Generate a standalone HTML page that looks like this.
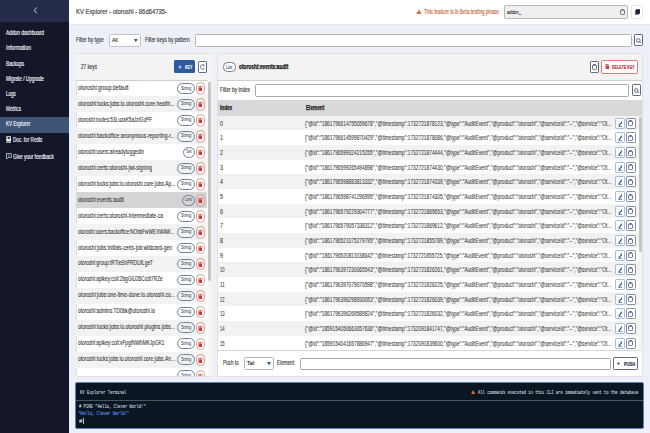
<!DOCTYPE html>
<html><head><meta charset="utf-8"><style>
html,body{margin:0;padding:0;background:#eef0f8;}
#root{position:relative;width:650px;height:433px;overflow:hidden;font-family:'Liberation Sans', sans-serif;}
.a{position:absolute;}
.t{position:absolute;white-space:nowrap;transform-origin:0 0;}
</style></head><body><div id="root">
<div class="a" style="left:69.00px;top:0.00px;width:581.00px;height:433.00px;background:#eef0f8;"></div>
<div class="a" style="left:69.00px;top:0.00px;width:581.00px;height:23.60px;background:#ffffff;"></div>
<div class="a" style="left:69.00px;top:23.60px;width:581.00px;height:0.80px;background:#e4e7f0;"></div>
<div class="a" style="left:0.00px;top:0.00px;width:69.00px;height:433.00px;background:#141729;"></div>
<div class="a" style="left:0.00px;top:0.00px;width:69.00px;height:21.50px;background:#262d4b;"></div>
<svg class="a" style="left:32.50px;top:7.40px;width:5.00px;height:6.80px" viewBox="0 0 5 6.8" preserveAspectRatio="none"><polyline points="3.5,0.7 1.3,3.4 3.5,6.1" fill="none" stroke="#cfd1dc" stroke-width="1.0" stroke-linecap="round" stroke-linejoin="round"/></svg>
<div class="a" style="left:0.00px;top:117.10px;width:69.00px;height:15.70px;background:#3e5577;"></div>
<span class="t" style="left:6.00px;top:30px;font-size:6.4px;line-height:6.4px;font-weight:400;color:#f4f5f9;font-family:'Liberation Sans', sans-serif;transform:scaleX(0.7529);-webkit-text-stroke:0.15px #f4f5f9;">Addon dashboard</span>
<span class="t" style="left:6.00px;top:45px;font-size:6.4px;line-height:6.4px;font-weight:400;color:#f4f5f9;font-family:'Liberation Sans', sans-serif;transform:scaleX(0.7816);-webkit-text-stroke:0.15px #f4f5f9;">Information</span>
<span class="t" style="left:6.00px;top:61px;font-size:6.4px;line-height:6.4px;font-weight:400;color:#f4f5f9;font-family:'Liberation Sans', sans-serif;transform:scaleX(0.7424);-webkit-text-stroke:0.15px #f4f5f9;">Backups</span>
<span class="t" style="left:6.00px;top:76px;font-size:6.4px;line-height:6.4px;font-weight:400;color:#f4f5f9;font-family:'Liberation Sans', sans-serif;transform:scaleX(0.7428);-webkit-text-stroke:0.15px #f4f5f9;">Migrate / Upgrade</span>
<span class="t" style="left:6.00px;top:91px;font-size:6.4px;line-height:6.4px;font-weight:400;color:#f4f5f9;font-family:'Liberation Sans', sans-serif;transform:scaleX(0.7143);-webkit-text-stroke:0.15px #f4f5f9;">Logs</span>
<span class="t" style="left:6.00px;top:106px;font-size:6.4px;line-height:6.4px;font-weight:400;color:#f4f5f9;font-family:'Liberation Sans', sans-serif;transform:scaleX(0.7284);-webkit-text-stroke:0.15px #f4f5f9;">Metrics</span>
<span class="t" style="left:6.00px;top:121px;font-size:6.4px;line-height:6.4px;font-weight:400;color:#f4f5f9;font-family:'Liberation Sans', sans-serif;transform:scaleX(0.7095);-webkit-text-stroke:0.15px #f4f5f9;">KV Explorer</span>
<svg class="a" style="left:6.00px;top:136.00px;width:5.40px;height:7.00px" viewBox="0 0 5.4 7" preserveAspectRatio="none"><rect x="0.3" y="0.2" width="5" height="6.6" rx="0.6" fill="#eceef4"/><rect x="1.6" y="1.2" width="2.4" height="1.6" fill="#141729"/><rect x="0.3" y="5.6" width="5" height="0.5" fill="#141729"/></svg>
<span class="t" style="left:13.00px;top:137px;font-size:6.4px;line-height:6.4px;font-weight:400;color:#f4f5f9;font-family:'Liberation Sans', sans-serif;transform:scaleX(0.7259);-webkit-text-stroke:0.15px #f4f5f9;">Doc. for Redis</span>
<svg class="a" style="left:6.00px;top:153.20px;width:5.80px;height:6.80px" viewBox="0 0 5.8 7" preserveAspectRatio="none"><path d="M0.5,0.5 H5.3 V4.6 H2 L0.5,6.3 Z" fill="none" stroke="#eceef4" stroke-width="0.7"/><rect x="2.6" y="1.4" width="0.6" height="1.7" fill="#eceef4"/><rect x="2.6" y="3.5" width="0.6" height="0.6" fill="#eceef4"/></svg>
<span class="t" style="left:13.00px;top:154px;font-size:6.4px;line-height:6.4px;font-weight:400;color:#f4f5f9;font-family:'Liberation Sans', sans-serif;transform:scaleX(0.7410);-webkit-text-stroke:0.15px #f4f5f9;">Give your feedback</span>
<span class="t" style="left:76.00px;top:8px;font-size:7.6px;line-height:7.6px;font-weight:400;color:#474747;font-family:'Liberation Sans', sans-serif;transform:scaleX(0.7755);-webkit-text-stroke:0.2px #474747;">KV Explorer - otoroshi - 86d64735-</span>
<svg class="a" style="left:415.60px;top:9.00px;width:5.80px;height:5.40px" viewBox="0 0 6 5.4" preserveAspectRatio="none"><polygon points="3,0.3 5.8,5.2 0.2,5.2" fill="#c4622d"/><rect x="2.75" y="1.8" width="0.5" height="1.8" fill="#fff"/><rect x="2.75" y="4.1" width="0.5" height="0.5" fill="#fff"/></svg>
<span class="t" style="left:423.80px;top:9px;font-size:6.7px;line-height:6.7px;font-weight:400;color:#c0602c;font-family:'Liberation Sans', sans-serif;transform:scaleX(0.7035);-webkit-text-stroke:0.12px #c0602c;">This feature is in Beta testing phase</span>
<div class="a" style="left:504.00px;top:5.30px;width:123.60px;height:13.50px;background:#efefef;box-sizing:border-box;border:0.7px solid #b8b8b8;border-radius:1.5px;"></div>
<span class="t" style="left:506.60px;top:9px;font-size:6.0px;line-height:6.0px;font-weight:400;color:#222;font-family:'Liberation Sans', sans-serif;transform:scaleX(0.6989);-webkit-text-stroke:0.1px #222;">addon_</span>
<svg class="a" style="left:620.00px;top:9.00px;width:5.00px;height:6.00px" viewBox="0 0 5 6" preserveAspectRatio="none"><rect x="0.5" y="1.05" width="4" height="4.5" rx="0.9" fill="none" stroke="#46536a" stroke-width="0.8"/><rect x="1.3" y="0.3" width="2.4" height="1.3" rx="0.4" fill="#6a6a6a"/></svg>
<div class="a" style="left:631.20px;top:5.30px;width:12.00px;height:14.10px;background:#ffffff;box-sizing:border-box;border:0.6px solid #e4e4e4;border-radius:1.5px;"></div>
<svg class="a" style="left:634.60px;top:9.40px;width:5.40px;height:6.00px" viewBox="0 0 5.4 6" preserveAspectRatio="none"><path d="M1.2,0.3 H5.2 V4.2 L3.6,5.4 H0.3 V1.4 Z" fill="#1d2433"/><path d="M0.3,5.8 L1.3,4.6" stroke="#1d2433" stroke-width="0.6"/></svg>
<span class="t" style="left:76.00px;top:37px;font-size:6.4px;line-height:6.4px;font-weight:400;color:#333;font-family:'Liberation Sans', sans-serif;transform:scaleX(0.7542);-webkit-text-stroke:0.12px #333;">Filter by type</span>
<div class="a" style="left:109.00px;top:34.20px;width:32.00px;height:12.50px;background:#ffffff;box-sizing:border-box;border:0.7px solid #c2c2c2;border-radius:1.5px;"></div>
<span class="t" style="left:111.60px;top:37px;font-size:6.0px;line-height:6.0px;font-weight:400;color:#222;font-family:'Liberation Sans', sans-serif;transform:scaleX(0.8393);-webkit-text-stroke:0.12px #222;">All</span>
<svg class="a" style="left:134.30px;top:38.80px;width:3.60px;height:3.40px" viewBox="0 0 3.6 3.4" preserveAspectRatio="none"><polygon points="0,0 3.6,0 1.8,3.4" fill="#2d5aa0"/></svg>
<span class="t" style="left:145.40px;top:37px;font-size:6.4px;line-height:6.4px;font-weight:400;color:#333;font-family:'Liberation Sans', sans-serif;transform:scaleX(0.7518);-webkit-text-stroke:0.12px #333;">Filter keys by pattern</span>
<div class="a" style="left:195.00px;top:34.30px;width:436.80px;height:12.30px;background:#ffffff;box-sizing:border-box;border:0.7px solid #b4b4b4;border-radius:1.5px;"></div>
<div class="a" style="left:634.00px;top:34.30px;width:9.20px;height:11.80px;background:#ffffff;box-sizing:border-box;border:0.7px solid #5c6b86;border-radius:1.2px;"></div>
<svg class="a" style="left:636.20px;top:37.60px;width:5.00px;height:5.60px" viewBox="0 0 5 5.6" preserveAspectRatio="none"><circle cx="2.3" cy="2.4" r="1.8" fill="none" stroke="#33415c" stroke-width="0.8"/><line x1="3.6" y1="3.7" x2="4.9" y2="5.3" stroke="#33415c" stroke-width="0.9"/></svg>
<div class="a" style="left:75.50px;top:53.30px;width:136.90px;height:323.70px;background:#ffffff;box-sizing:border-box;border:0.6px solid #e0e0e0;border-radius:2px;"></div>
<div class="a" style="left:76.10px;top:53.90px;width:135.70px;height:26.10px;background:#f3f3f3;"></div>
<div class="a" style="left:76.10px;top:79.50px;width:135.70px;height:0.90px;background:#cfcfcf;"></div>
<span class="t" style="left:80.80px;top:64px;font-size:6.4px;line-height:6.4px;font-weight:400;color:#333;font-family:'Liberation Sans', sans-serif;transform:scaleX(0.7262);-webkit-text-stroke:0.12px #333;">27 keys</span>
<div class="a" style="left:174.20px;top:60.20px;width:20.90px;height:13.00px;background:#2d5a9e;border-radius:1.5px;"></div>
<svg class="a" style="left:178.00px;top:65.00px;width:4.00px;height:4.00px" viewBox="0 0 4 4" preserveAspectRatio="none"><rect x="1.55" y="0.2" width="0.9" height="3.6" fill="#c9d6ec"/><rect x="0.2" y="1.55" width="3.6" height="0.9" fill="#c9d6ec"/></svg>
<span class="t" style="left:185.00px;top:65px;font-size:5.4px;line-height:5.4px;font-weight:700;color:#ffffff;font-family:'Liberation Sans', sans-serif;transform:scaleX(0.6580);-webkit-text-stroke:0.12px #ffffff;">KEY</span>
<div class="a" style="left:197.90px;top:61.00px;width:8.90px;height:11.80px;background:#ffffff;box-sizing:border-box;border:0.7px solid #5c6b86;border-radius:1.2px;"></div>
<svg class="a" style="left:199.90px;top:63.80px;width:5.00px;height:6.40px" viewBox="0 0 5 6.4" preserveAspectRatio="none"><path d="M3.9,1.5 A2,2.3 0 1 0 4.3,3.6" fill="none" stroke="#3a4660" stroke-width="0.7"/><polygon points="3.1,0.3 4.7,1.3 3.4,2.4" fill="#3a4660"/></svg>
<div class="a" style="left:76.1px;top:80.4px;width:135.7px;height:296.0px;overflow:hidden">
<span class="t" style="left:1.80px;top:5px;font-size:6.6px;line-height:6.6px;font-weight:400;color:#2c2c2c;font-family:'Liberation Sans', sans-serif;transform:scaleX(0.7916);-webkit-text-stroke:0.07px #2c2c2c;">otoroshi:group:default</span>
<div class="a" style="left:100.80px;top:2.40px;width:17.90px;height:10.90px;background:#ffffff;box-sizing:border-box;border:0.7px solid #6f7d95;border-radius:6px;"></div>
<span class="t" style="left:104.55px;top:6px;font-size:5.6px;line-height:5.6px;font-weight:400;color:#3d4a63;font-family:'Liberation Sans', sans-serif;transform:scaleX(0.6974);-webkit-text-stroke:0.05px #3d4a63;">String</span>
<div class="a" style="left:119.90px;top:1.70px;width:9.10px;height:12.60px;background:#ffffff;box-sizing:border-box;border:0.6px solid #e49a9a;border-radius:50px;"></div>
<svg class="a" style="left:122.00px;top:5.50px;width:4.60px;height:5.30px" viewBox="0 0 4.6 5.3" preserveAspectRatio="none"><rect x="1.5" y="0" width="1.6" height="0.7" fill="#c1272d"/><rect x="0" y="0.6" width="4.6" height="0.8" fill="#c1272d"/><path d="M0.6,1.9 H4.0 V5.3 H0.6 Z" fill="#c1272d"/><rect x="1.45" y="2.6" width="0.4" height="2" fill="#e9a5a8"/><rect x="2.75" y="2.6" width="0.4" height="2" fill="#e9a5a8"/></svg>
<div class="a" style="left:0.00px;top:15.88px;width:131.20px;height:15.98px;background:#f2f2f2;"></div>
<span class="t" style="left:1.80px;top:21px;font-size:6.6px;line-height:6.6px;font-weight:400;color:#2c2c2c;font-family:'Liberation Sans', sans-serif;transform:scaleX(0.7623);-webkit-text-stroke:0.07px #2c2c2c;">otoroshi:locks:jobs:io.otoroshi.core.health...</span>
<div class="a" style="left:100.80px;top:18.38px;width:17.90px;height:10.90px;background:#f2f2f2;box-sizing:border-box;border:0.7px solid #6f7d95;border-radius:6px;"></div>
<span class="t" style="left:104.55px;top:21px;font-size:5.6px;line-height:5.6px;font-weight:400;color:#3d4a63;font-family:'Liberation Sans', sans-serif;transform:scaleX(0.6974);-webkit-text-stroke:0.05px #3d4a63;">String</span>
<div class="a" style="left:119.90px;top:17.68px;width:9.10px;height:12.60px;background:#f2f2f2;box-sizing:border-box;border:0.6px solid #e49a9a;border-radius:50px;"></div>
<svg class="a" style="left:122.00px;top:21.48px;width:4.60px;height:5.30px" viewBox="0 0 4.6 5.3" preserveAspectRatio="none"><rect x="1.5" y="0" width="1.6" height="0.7" fill="#c1272d"/><rect x="0" y="0.6" width="4.6" height="0.8" fill="#c1272d"/><path d="M0.6,1.9 H4.0 V5.3 H0.6 Z" fill="#c1272d"/><rect x="1.45" y="2.6" width="0.4" height="2" fill="#e9a5a8"/><rect x="2.75" y="2.6" width="0.4" height="2" fill="#e9a5a8"/></svg>
<span class="t" style="left:1.80px;top:37px;font-size:6.6px;line-height:6.6px;font-weight:400;color:#2c2c2c;font-family:'Liberation Sans', sans-serif;transform:scaleX(0.7109);-webkit-text-stroke:0.07px #2c2c2c;">otoroshi:routes:53LuzaK5aJztGzPF</span>
<div class="a" style="left:100.80px;top:34.36px;width:17.90px;height:10.90px;background:#ffffff;box-sizing:border-box;border:0.7px solid #6f7d95;border-radius:6px;"></div>
<span class="t" style="left:104.55px;top:37px;font-size:5.6px;line-height:5.6px;font-weight:400;color:#3d4a63;font-family:'Liberation Sans', sans-serif;transform:scaleX(0.6974);-webkit-text-stroke:0.05px #3d4a63;">String</span>
<div class="a" style="left:119.90px;top:33.66px;width:9.10px;height:12.60px;background:#ffffff;box-sizing:border-box;border:0.6px solid #e49a9a;border-radius:50px;"></div>
<svg class="a" style="left:122.00px;top:37.46px;width:4.60px;height:5.30px" viewBox="0 0 4.6 5.3" preserveAspectRatio="none"><rect x="1.5" y="0" width="1.6" height="0.7" fill="#c1272d"/><rect x="0" y="0.6" width="4.6" height="0.8" fill="#c1272d"/><path d="M0.6,1.9 H4.0 V5.3 H0.6 Z" fill="#c1272d"/><rect x="1.45" y="2.6" width="0.4" height="2" fill="#e9a5a8"/><rect x="2.75" y="2.6" width="0.4" height="2" fill="#e9a5a8"/></svg>
<div class="a" style="left:0.00px;top:47.84px;width:131.20px;height:15.98px;background:#f2f2f2;"></div>
<span class="t" style="left:1.80px;top:53px;font-size:6.6px;line-height:6.6px;font-weight:400;color:#2c2c2c;font-family:'Liberation Sans', sans-serif;transform:scaleX(0.7523);-webkit-text-stroke:0.07px #2c2c2c;">otoroshi:backoffice:anonymous-reporting-r...</span>
<div class="a" style="left:100.80px;top:50.34px;width:17.90px;height:10.90px;background:#f2f2f2;box-sizing:border-box;border:0.7px solid #6f7d95;border-radius:6px;"></div>
<span class="t" style="left:104.55px;top:53px;font-size:5.6px;line-height:5.6px;font-weight:400;color:#3d4a63;font-family:'Liberation Sans', sans-serif;transform:scaleX(0.6974);-webkit-text-stroke:0.05px #3d4a63;">String</span>
<div class="a" style="left:119.90px;top:49.64px;width:9.10px;height:12.60px;background:#f2f2f2;box-sizing:border-box;border:0.6px solid #e49a9a;border-radius:50px;"></div>
<svg class="a" style="left:122.00px;top:53.44px;width:4.60px;height:5.30px" viewBox="0 0 4.6 5.3" preserveAspectRatio="none"><rect x="1.5" y="0" width="1.6" height="0.7" fill="#c1272d"/><rect x="0" y="0.6" width="4.6" height="0.8" fill="#c1272d"/><path d="M0.6,1.9 H4.0 V5.3 H0.6 Z" fill="#c1272d"/><rect x="1.45" y="2.6" width="0.4" height="2" fill="#e9a5a8"/><rect x="2.75" y="2.6" width="0.4" height="2" fill="#e9a5a8"/></svg>
<span class="t" style="left:1.80px;top:69px;font-size:6.6px;line-height:6.6px;font-weight:400;color:#2c2c2c;font-family:'Liberation Sans', sans-serif;transform:scaleX(0.7349);-webkit-text-stroke:0.07px #2c2c2c;">otoroshi:users:alreadyloggedin</span>
<div class="a" style="left:107.10px;top:66.32px;width:11.60px;height:10.90px;background:#ffffff;box-sizing:border-box;border:0.7px solid #6f7d95;border-radius:6px;"></div>
<span class="t" style="left:110.10px;top:69px;font-size:5.6px;line-height:5.6px;font-weight:400;color:#3d4a63;font-family:'Liberation Sans', sans-serif;transform:scaleX(0.6424);-webkit-text-stroke:0.05px #3d4a63;">Set</span>
<div class="a" style="left:119.90px;top:65.62px;width:9.10px;height:12.60px;background:#ffffff;box-sizing:border-box;border:0.6px solid #e49a9a;border-radius:50px;"></div>
<svg class="a" style="left:122.00px;top:69.42px;width:4.60px;height:5.30px" viewBox="0 0 4.6 5.3" preserveAspectRatio="none"><rect x="1.5" y="0" width="1.6" height="0.7" fill="#c1272d"/><rect x="0" y="0.6" width="4.6" height="0.8" fill="#c1272d"/><path d="M0.6,1.9 H4.0 V5.3 H0.6 Z" fill="#c1272d"/><rect x="1.45" y="2.6" width="0.4" height="2" fill="#e9a5a8"/><rect x="2.75" y="2.6" width="0.4" height="2" fill="#e9a5a8"/></svg>
<div class="a" style="left:0.00px;top:79.80px;width:131.20px;height:15.98px;background:#f2f2f2;"></div>
<span class="t" style="left:1.80px;top:85px;font-size:6.6px;line-height:6.6px;font-weight:400;color:#2c2c2c;font-family:'Liberation Sans', sans-serif;transform:scaleX(0.7534);-webkit-text-stroke:0.07px #2c2c2c;">otoroshi:certs:otoroshi-jwt-signing</span>
<div class="a" style="left:100.80px;top:82.30px;width:17.90px;height:10.90px;background:#f2f2f2;box-sizing:border-box;border:0.7px solid #6f7d95;border-radius:6px;"></div>
<span class="t" style="left:104.55px;top:85px;font-size:5.6px;line-height:5.6px;font-weight:400;color:#3d4a63;font-family:'Liberation Sans', sans-serif;transform:scaleX(0.6974);-webkit-text-stroke:0.05px #3d4a63;">String</span>
<div class="a" style="left:119.90px;top:81.60px;width:9.10px;height:12.60px;background:#f2f2f2;box-sizing:border-box;border:0.6px solid #e49a9a;border-radius:50px;"></div>
<svg class="a" style="left:122.00px;top:85.40px;width:4.60px;height:5.30px" viewBox="0 0 4.6 5.3" preserveAspectRatio="none"><rect x="1.5" y="0" width="1.6" height="0.7" fill="#c1272d"/><rect x="0" y="0.6" width="4.6" height="0.8" fill="#c1272d"/><path d="M0.6,1.9 H4.0 V5.3 H0.6 Z" fill="#c1272d"/><rect x="1.45" y="2.6" width="0.4" height="2" fill="#e9a5a8"/><rect x="2.75" y="2.6" width="0.4" height="2" fill="#e9a5a8"/></svg>
<span class="t" style="left:1.80px;top:101px;font-size:6.6px;line-height:6.6px;font-weight:400;color:#2c2c2c;font-family:'Liberation Sans', sans-serif;transform:scaleX(0.7464);-webkit-text-stroke:0.07px #2c2c2c;">otoroshi:locks:jobs:io.otoroshi.core.jobs.Ap...</span>
<div class="a" style="left:100.80px;top:98.28px;width:17.90px;height:10.90px;background:#ffffff;box-sizing:border-box;border:0.7px solid #6f7d95;border-radius:6px;"></div>
<span class="t" style="left:104.55px;top:101px;font-size:5.6px;line-height:5.6px;font-weight:400;color:#3d4a63;font-family:'Liberation Sans', sans-serif;transform:scaleX(0.6974);-webkit-text-stroke:0.05px #3d4a63;">String</span>
<div class="a" style="left:119.90px;top:97.58px;width:9.10px;height:12.60px;background:#ffffff;box-sizing:border-box;border:0.6px solid #e49a9a;border-radius:50px;"></div>
<svg class="a" style="left:122.00px;top:101.38px;width:4.60px;height:5.30px" viewBox="0 0 4.6 5.3" preserveAspectRatio="none"><rect x="1.5" y="0" width="1.6" height="0.7" fill="#c1272d"/><rect x="0" y="0.6" width="4.6" height="0.8" fill="#c1272d"/><path d="M0.6,1.9 H4.0 V5.3 H0.6 Z" fill="#c1272d"/><rect x="1.45" y="2.6" width="0.4" height="2" fill="#e9a5a8"/><rect x="2.75" y="2.6" width="0.4" height="2" fill="#e9a5a8"/></svg>
<div class="a" style="left:0.00px;top:111.76px;width:131.20px;height:15.98px;background:#d5d5d5;"></div>
<span class="t" style="left:1.80px;top:117px;font-size:6.6px;line-height:6.6px;font-weight:400;color:#2c2c2c;font-family:'Liberation Sans', sans-serif;transform:scaleX(0.7558);-webkit-text-stroke:0.07px #2c2c2c;">otoroshi:events:audit</span>
<div class="a" style="left:105.50px;top:114.26px;width:13.20px;height:10.90px;background:#d5d5d5;box-sizing:border-box;border:0.7px solid #6f7d95;border-radius:6px;"></div>
<span class="t" style="left:108.70px;top:117px;font-size:5.6px;line-height:5.6px;font-weight:400;color:#3d4a63;font-family:'Liberation Sans', sans-serif;transform:scaleX(0.7570);-webkit-text-stroke:0.05px #3d4a63;">List</span>
<div class="a" style="left:119.90px;top:113.56px;width:9.10px;height:12.60px;background:#d5d5d5;box-sizing:border-box;border:0.6px solid #e49a9a;border-radius:50px;"></div>
<svg class="a" style="left:122.00px;top:117.36px;width:4.60px;height:5.30px" viewBox="0 0 4.6 5.3" preserveAspectRatio="none"><rect x="1.5" y="0" width="1.6" height="0.7" fill="#c1272d"/><rect x="0" y="0.6" width="4.6" height="0.8" fill="#c1272d"/><path d="M0.6,1.9 H4.0 V5.3 H0.6 Z" fill="#c1272d"/><rect x="1.45" y="2.6" width="0.4" height="2" fill="#e9a5a8"/><rect x="2.75" y="2.6" width="0.4" height="2" fill="#e9a5a8"/></svg>
<span class="t" style="left:1.80px;top:133px;font-size:6.6px;line-height:6.6px;font-weight:400;color:#2c2c2c;font-family:'Liberation Sans', sans-serif;transform:scaleX(0.7555);-webkit-text-stroke:0.07px #2c2c2c;">otoroshi:certs:otoroshi-intermediate-ca</span>
<div class="a" style="left:100.80px;top:130.24px;width:17.90px;height:10.90px;background:#ffffff;box-sizing:border-box;border:0.7px solid #6f7d95;border-radius:6px;"></div>
<span class="t" style="left:104.55px;top:133px;font-size:5.6px;line-height:5.6px;font-weight:400;color:#3d4a63;font-family:'Liberation Sans', sans-serif;transform:scaleX(0.6974);-webkit-text-stroke:0.05px #3d4a63;">String</span>
<div class="a" style="left:119.90px;top:129.54px;width:9.10px;height:12.60px;background:#ffffff;box-sizing:border-box;border:0.6px solid #e49a9a;border-radius:50px;"></div>
<svg class="a" style="left:122.00px;top:133.34px;width:4.60px;height:5.30px" viewBox="0 0 4.6 5.3" preserveAspectRatio="none"><rect x="1.5" y="0" width="1.6" height="0.7" fill="#c1272d"/><rect x="0" y="0.6" width="4.6" height="0.8" fill="#c1272d"/><path d="M0.6,1.9 H4.0 V5.3 H0.6 Z" fill="#c1272d"/><rect x="1.45" y="2.6" width="0.4" height="2" fill="#e9a5a8"/><rect x="2.75" y="2.6" width="0.4" height="2" fill="#e9a5a8"/></svg>
<div class="a" style="left:0.00px;top:143.72px;width:131.20px;height:15.98px;background:#f2f2f2;"></div>
<span class="t" style="left:1.80px;top:149px;font-size:6.6px;line-height:6.6px;font-weight:400;color:#2c2c2c;font-family:'Liberation Sans', sans-serif;transform:scaleX(0.6999);-webkit-text-stroke:0.07px #2c2c2c;">otoroshi:users:backoffice:NObbFwWEXWAW...</span>
<div class="a" style="left:100.80px;top:146.22px;width:17.90px;height:10.90px;background:#f2f2f2;box-sizing:border-box;border:0.7px solid #6f7d95;border-radius:6px;"></div>
<span class="t" style="left:104.55px;top:149px;font-size:5.6px;line-height:5.6px;font-weight:400;color:#3d4a63;font-family:'Liberation Sans', sans-serif;transform:scaleX(0.6974);-webkit-text-stroke:0.05px #3d4a63;">String</span>
<div class="a" style="left:119.90px;top:145.52px;width:9.10px;height:12.60px;background:#f2f2f2;box-sizing:border-box;border:0.6px solid #e49a9a;border-radius:50px;"></div>
<svg class="a" style="left:122.00px;top:149.32px;width:4.60px;height:5.30px" viewBox="0 0 4.6 5.3" preserveAspectRatio="none"><rect x="1.5" y="0" width="1.6" height="0.7" fill="#c1272d"/><rect x="0" y="0.6" width="4.6" height="0.8" fill="#c1272d"/><path d="M0.6,1.9 H4.0 V5.3 H0.6 Z" fill="#c1272d"/><rect x="1.45" y="2.6" width="0.4" height="2" fill="#e9a5a8"/><rect x="2.75" y="2.6" width="0.4" height="2" fill="#e9a5a8"/></svg>
<span class="t" style="left:1.80px;top:165px;font-size:6.6px;line-height:6.6px;font-weight:400;color:#2c2c2c;font-family:'Liberation Sans', sans-serif;transform:scaleX(0.7565);-webkit-text-stroke:0.07px #2c2c2c;">otoroshi:jobs:initials-certs-job:wildcard-gen</span>
<div class="a" style="left:100.80px;top:162.20px;width:17.90px;height:10.90px;background:#ffffff;box-sizing:border-box;border:0.7px solid #6f7d95;border-radius:6px;"></div>
<span class="t" style="left:104.55px;top:165px;font-size:5.6px;line-height:5.6px;font-weight:400;color:#3d4a63;font-family:'Liberation Sans', sans-serif;transform:scaleX(0.6974);-webkit-text-stroke:0.05px #3d4a63;">String</span>
<div class="a" style="left:119.90px;top:161.50px;width:9.10px;height:12.60px;background:#ffffff;box-sizing:border-box;border:0.6px solid #e49a9a;border-radius:50px;"></div>
<svg class="a" style="left:122.00px;top:165.30px;width:4.60px;height:5.30px" viewBox="0 0 4.6 5.3" preserveAspectRatio="none"><rect x="1.5" y="0" width="1.6" height="0.7" fill="#c1272d"/><rect x="0" y="0.6" width="4.6" height="0.8" fill="#c1272d"/><path d="M0.6,1.9 H4.0 V5.3 H0.6 Z" fill="#c1272d"/><rect x="1.45" y="2.6" width="0.4" height="2" fill="#e9a5a8"/><rect x="2.75" y="2.6" width="0.4" height="2" fill="#e9a5a8"/></svg>
<div class="a" style="left:0.00px;top:175.68px;width:131.20px;height:15.98px;background:#f2f2f2;"></div>
<span class="t" style="left:1.80px;top:180px;font-size:6.6px;line-height:6.6px;font-weight:400;color:#2c2c2c;font-family:'Liberation Sans', sans-serif;transform:scaleX(0.7265);-webkit-text-stroke:0.07px #2c2c2c;">otoroshi:group:tRTleShPRDUfLgeT</span>
<div class="a" style="left:100.80px;top:178.18px;width:17.90px;height:10.90px;background:#f2f2f2;box-sizing:border-box;border:0.7px solid #6f7d95;border-radius:6px;"></div>
<span class="t" style="left:104.55px;top:181px;font-size:5.6px;line-height:5.6px;font-weight:400;color:#3d4a63;font-family:'Liberation Sans', sans-serif;transform:scaleX(0.6974);-webkit-text-stroke:0.05px #3d4a63;">String</span>
<div class="a" style="left:119.90px;top:177.48px;width:9.10px;height:12.60px;background:#f2f2f2;box-sizing:border-box;border:0.6px solid #e49a9a;border-radius:50px;"></div>
<svg class="a" style="left:122.00px;top:181.28px;width:4.60px;height:5.30px" viewBox="0 0 4.6 5.3" preserveAspectRatio="none"><rect x="1.5" y="0" width="1.6" height="0.7" fill="#c1272d"/><rect x="0" y="0.6" width="4.6" height="0.8" fill="#c1272d"/><path d="M0.6,1.9 H4.0 V5.3 H0.6 Z" fill="#c1272d"/><rect x="1.45" y="2.6" width="0.4" height="2" fill="#e9a5a8"/><rect x="2.75" y="2.6" width="0.4" height="2" fill="#e9a5a8"/></svg>
<span class="t" style="left:1.80px;top:196px;font-size:6.6px;line-height:6.6px;font-weight:400;color:#2c2c2c;font-family:'Liberation Sans', sans-serif;transform:scaleX(0.7222);-webkit-text-stroke:0.07px #2c2c2c;">otoroshi:apikey:coll:2bgGiU26Ccdt7RZe</span>
<div class="a" style="left:100.80px;top:194.16px;width:17.90px;height:10.90px;background:#ffffff;box-sizing:border-box;border:0.7px solid #6f7d95;border-radius:6px;"></div>
<span class="t" style="left:104.55px;top:197px;font-size:5.6px;line-height:5.6px;font-weight:400;color:#3d4a63;font-family:'Liberation Sans', sans-serif;transform:scaleX(0.6974);-webkit-text-stroke:0.05px #3d4a63;">String</span>
<div class="a" style="left:119.90px;top:193.46px;width:9.10px;height:12.60px;background:#ffffff;box-sizing:border-box;border:0.6px solid #e49a9a;border-radius:50px;"></div>
<svg class="a" style="left:122.00px;top:197.26px;width:4.60px;height:5.30px" viewBox="0 0 4.6 5.3" preserveAspectRatio="none"><rect x="1.5" y="0" width="1.6" height="0.7" fill="#c1272d"/><rect x="0" y="0.6" width="4.6" height="0.8" fill="#c1272d"/><path d="M0.6,1.9 H4.0 V5.3 H0.6 Z" fill="#c1272d"/><rect x="1.45" y="2.6" width="0.4" height="2" fill="#e9a5a8"/><rect x="2.75" y="2.6" width="0.4" height="2" fill="#e9a5a8"/></svg>
<div class="a" style="left:0.00px;top:207.64px;width:131.20px;height:15.98px;background:#f2f2f2;"></div>
<span class="t" style="left:1.80px;top:212px;font-size:6.6px;line-height:6.6px;font-weight:400;color:#2c2c2c;font-family:'Liberation Sans', sans-serif;transform:scaleX(0.7561);-webkit-text-stroke:0.07px #2c2c2c;">otoroshi:jobs:one-time-done:io.otoroshi.co...</span>
<div class="a" style="left:100.80px;top:210.14px;width:17.90px;height:10.90px;background:#f2f2f2;box-sizing:border-box;border:0.7px solid #6f7d95;border-radius:6px;"></div>
<span class="t" style="left:104.55px;top:213px;font-size:5.6px;line-height:5.6px;font-weight:400;color:#3d4a63;font-family:'Liberation Sans', sans-serif;transform:scaleX(0.6974);-webkit-text-stroke:0.05px #3d4a63;">String</span>
<div class="a" style="left:119.90px;top:209.44px;width:9.10px;height:12.60px;background:#f2f2f2;box-sizing:border-box;border:0.6px solid #e49a9a;border-radius:50px;"></div>
<svg class="a" style="left:122.00px;top:213.24px;width:4.60px;height:5.30px" viewBox="0 0 4.6 5.3" preserveAspectRatio="none"><rect x="1.5" y="0" width="1.6" height="0.7" fill="#c1272d"/><rect x="0" y="0.6" width="4.6" height="0.8" fill="#c1272d"/><path d="M0.6,1.9 H4.0 V5.3 H0.6 Z" fill="#c1272d"/><rect x="1.45" y="2.6" width="0.4" height="2" fill="#e9a5a8"/><rect x="2.75" y="2.6" width="0.4" height="2" fill="#e9a5a8"/></svg>
<span class="t" style="left:1.80px;top:228px;font-size:6.6px;line-height:6.6px;font-weight:400;color:#2c2c2c;font-family:'Liberation Sans', sans-serif;transform:scaleX(0.7339);-webkit-text-stroke:0.07px #2c2c2c;">otoroshi:admins:TD0bk@otoroshi.io</span>
<div class="a" style="left:100.80px;top:226.12px;width:17.90px;height:10.90px;background:#ffffff;box-sizing:border-box;border:0.7px solid #6f7d95;border-radius:6px;"></div>
<span class="t" style="left:104.55px;top:229px;font-size:5.6px;line-height:5.6px;font-weight:400;color:#3d4a63;font-family:'Liberation Sans', sans-serif;transform:scaleX(0.6974);-webkit-text-stroke:0.05px #3d4a63;">String</span>
<div class="a" style="left:119.90px;top:225.42px;width:9.10px;height:12.60px;background:#ffffff;box-sizing:border-box;border:0.6px solid #e49a9a;border-radius:50px;"></div>
<svg class="a" style="left:122.00px;top:229.22px;width:4.60px;height:5.30px" viewBox="0 0 4.6 5.3" preserveAspectRatio="none"><rect x="1.5" y="0" width="1.6" height="0.7" fill="#c1272d"/><rect x="0" y="0.6" width="4.6" height="0.8" fill="#c1272d"/><path d="M0.6,1.9 H4.0 V5.3 H0.6 Z" fill="#c1272d"/><rect x="1.45" y="2.6" width="0.4" height="2" fill="#e9a5a8"/><rect x="2.75" y="2.6" width="0.4" height="2" fill="#e9a5a8"/></svg>
<div class="a" style="left:0.00px;top:239.60px;width:131.20px;height:15.98px;background:#f2f2f2;"></div>
<span class="t" style="left:1.80px;top:244px;font-size:6.6px;line-height:6.6px;font-weight:400;color:#2c2c2c;font-family:'Liberation Sans', sans-serif;transform:scaleX(0.7539);-webkit-text-stroke:0.07px #2c2c2c;">otoroshi:locks:jobs:io.otoroshi.plugins.jobs...</span>
<div class="a" style="left:100.80px;top:242.10px;width:17.90px;height:10.90px;background:#f2f2f2;box-sizing:border-box;border:0.7px solid #6f7d95;border-radius:6px;"></div>
<span class="t" style="left:104.55px;top:245px;font-size:5.6px;line-height:5.6px;font-weight:400;color:#3d4a63;font-family:'Liberation Sans', sans-serif;transform:scaleX(0.6974);-webkit-text-stroke:0.05px #3d4a63;">String</span>
<div class="a" style="left:119.90px;top:241.40px;width:9.10px;height:12.60px;background:#f2f2f2;box-sizing:border-box;border:0.6px solid #e49a9a;border-radius:50px;"></div>
<svg class="a" style="left:122.00px;top:245.20px;width:4.60px;height:5.30px" viewBox="0 0 4.6 5.3" preserveAspectRatio="none"><rect x="1.5" y="0" width="1.6" height="0.7" fill="#c1272d"/><rect x="0" y="0.6" width="4.6" height="0.8" fill="#c1272d"/><path d="M0.6,1.9 H4.0 V5.3 H0.6 Z" fill="#c1272d"/><rect x="1.45" y="2.6" width="0.4" height="2" fill="#e9a5a8"/><rect x="2.75" y="2.6" width="0.4" height="2" fill="#e9a5a8"/></svg>
<span class="t" style="left:1.80px;top:260px;font-size:6.6px;line-height:6.6px;font-weight:400;color:#2c2c2c;font-family:'Liberation Sans', sans-serif;transform:scaleX(0.7262);-webkit-text-stroke:0.07px #2c2c2c;">otoroshi:apikey:coll:vFpgtNWhMKJpGK1</span>
<div class="a" style="left:100.80px;top:258.08px;width:17.90px;height:10.90px;background:#ffffff;box-sizing:border-box;border:0.7px solid #6f7d95;border-radius:6px;"></div>
<span class="t" style="left:104.55px;top:261px;font-size:5.6px;line-height:5.6px;font-weight:400;color:#3d4a63;font-family:'Liberation Sans', sans-serif;transform:scaleX(0.6974);-webkit-text-stroke:0.05px #3d4a63;">String</span>
<div class="a" style="left:119.90px;top:257.38px;width:9.10px;height:12.60px;background:#ffffff;box-sizing:border-box;border:0.6px solid #e49a9a;border-radius:50px;"></div>
<svg class="a" style="left:122.00px;top:261.18px;width:4.60px;height:5.30px" viewBox="0 0 4.6 5.3" preserveAspectRatio="none"><rect x="1.5" y="0" width="1.6" height="0.7" fill="#c1272d"/><rect x="0" y="0.6" width="4.6" height="0.8" fill="#c1272d"/><path d="M0.6,1.9 H4.0 V5.3 H0.6 Z" fill="#c1272d"/><rect x="1.45" y="2.6" width="0.4" height="2" fill="#e9a5a8"/><rect x="2.75" y="2.6" width="0.4" height="2" fill="#e9a5a8"/></svg>
<div class="a" style="left:0.00px;top:271.56px;width:131.20px;height:15.98px;background:#f2f2f2;"></div>
<span class="t" style="left:1.80px;top:276px;font-size:6.6px;line-height:6.6px;font-weight:400;color:#2c2c2c;font-family:'Liberation Sans', sans-serif;transform:scaleX(0.7434);-webkit-text-stroke:0.07px #2c2c2c;">otoroshi:locks:jobs:io.otoroshi.core.jobs.An...</span>
<div class="a" style="left:100.80px;top:274.06px;width:17.90px;height:10.90px;background:#f2f2f2;box-sizing:border-box;border:0.7px solid #6f7d95;border-radius:6px;"></div>
<span class="t" style="left:104.55px;top:277px;font-size:5.6px;line-height:5.6px;font-weight:400;color:#3d4a63;font-family:'Liberation Sans', sans-serif;transform:scaleX(0.6974);-webkit-text-stroke:0.05px #3d4a63;">String</span>
<div class="a" style="left:119.90px;top:273.36px;width:9.10px;height:12.60px;background:#f2f2f2;box-sizing:border-box;border:0.6px solid #e49a9a;border-radius:50px;"></div>
<svg class="a" style="left:122.00px;top:277.16px;width:4.60px;height:5.30px" viewBox="0 0 4.6 5.3" preserveAspectRatio="none"><rect x="1.5" y="0" width="1.6" height="0.7" fill="#c1272d"/><rect x="0" y="0.6" width="4.6" height="0.8" fill="#c1272d"/><path d="M0.6,1.9 H4.0 V5.3 H0.6 Z" fill="#c1272d"/><rect x="1.45" y="2.6" width="0.4" height="2" fill="#e9a5a8"/><rect x="2.75" y="2.6" width="0.4" height="2" fill="#e9a5a8"/></svg>
<div class="a" style="left:100.80px;top:290.04px;width:17.90px;height:10.90px;background:#ffffff;box-sizing:border-box;border:0.7px solid #6f7d95;border-radius:6px;"></div>
<span class="t" style="left:104.55px;top:293px;font-size:5.6px;line-height:5.6px;font-weight:400;color:#3d4a63;font-family:'Liberation Sans', sans-serif;transform:scaleX(0.6974);-webkit-text-stroke:0.05px #3d4a63;">String</span>
<div class="a" style="left:119.90px;top:289.34px;width:9.10px;height:12.60px;background:#ffffff;box-sizing:border-box;border:0.6px solid #e49a9a;border-radius:50px;"></div>
<svg class="a" style="left:122.00px;top:293.14px;width:4.60px;height:5.30px" viewBox="0 0 4.6 5.3" preserveAspectRatio="none"><rect x="1.5" y="0" width="1.6" height="0.7" fill="#c1272d"/><rect x="0" y="0.6" width="4.6" height="0.8" fill="#c1272d"/><path d="M0.6,1.9 H4.0 V5.3 H0.6 Z" fill="#c1272d"/><rect x="1.45" y="2.6" width="0.4" height="2" fill="#e9a5a8"/><rect x="2.75" y="2.6" width="0.4" height="2" fill="#e9a5a8"/></svg>
<div class="a" style="left:131.60px;top:0.00px;width:4.10px;height:296.00px;background:#f5f5f5;"></div>
<div class="a" style="left:132.00px;top:1.70px;width:2.70px;height:199.40px;background:#c4c4c4;border-radius:1.4px;"></div>
</div>
<div class="a" style="left:217.10px;top:53.30px;width:426.00px;height:323.70px;background:#ffffff;box-sizing:border-box;border:0.6px solid #e0e0e0;border-radius:2px;"></div>
<div class="a" style="left:217.70px;top:53.90px;width:424.80px;height:25.90px;background:#f3f3f3;"></div>
<div class="a" style="left:217.70px;top:79.60px;width:424.80px;height:0.90px;background:#cfcfcf;"></div>
<div class="a" style="left:222.70px;top:62.40px;width:13.00px;height:9.40px;background:#ffffff;box-sizing:border-box;border:0.7px solid #6f7d95;border-radius:4.5px;"></div>
<span class="t" style="left:226.20px;top:65px;font-size:5.0px;line-height:5.0px;font-weight:400;color:#3d4a63;font-family:'Liberation Sans', sans-serif;transform:scaleX(0.7968);-webkit-text-stroke:0.1px #3d4a63;">List</span>
<span class="t" style="left:238.60px;top:64px;font-size:6.4px;line-height:6.4px;font-weight:700;color:#111;font-family:'Liberation Sans', sans-serif;transform:scaleX(0.7545);-webkit-text-stroke:0.25px #111;">otoroshi:events:audit</span>
<div class="a" style="left:590.10px;top:61.00px;width:8.70px;height:11.70px;background:#ffffff;box-sizing:border-box;border:0.7px solid #5c6b86;border-radius:1.2px;"></div>
<svg class="a" style="left:592.00px;top:64.00px;width:5.00px;height:6.00px" viewBox="0 0 5 6" preserveAspectRatio="none"><rect x="0.5" y="1.05" width="4" height="4.5" rx="0.9" fill="none" stroke="#46536a" stroke-width="0.8"/><rect x="1.3" y="0.3" width="2.4" height="1.3" rx="0.4" fill="#3e4b63"/></svg>
<div class="a" style="left:601.40px;top:60.10px;width:36.40px;height:13.50px;background:#ffffff;box-sizing:border-box;border:0.6px solid #dc7a7a;border-radius:1.8px;"></div>
<svg class="a" style="left:604.50px;top:64.20px;width:4.60px;height:5.30px" viewBox="0 0 4.6 5.3" preserveAspectRatio="none"><rect x="1.5" y="0" width="1.6" height="0.7" fill="#c1272d"/><rect x="0" y="0.6" width="4.6" height="0.8" fill="#c1272d"/><path d="M0.6,1.9 H4.0 V5.3 H0.6 Z" fill="#c1272d"/><rect x="1.45" y="2.6" width="0.4" height="2" fill="#e9a5a8"/><rect x="2.75" y="2.6" width="0.4" height="2" fill="#e9a5a8"/></svg>
<span class="t" style="left:612.00px;top:65px;font-size:5.9px;line-height:5.9px;font-weight:700;color:#c0282f;font-family:'Liberation Sans', sans-serif;transform:scaleX(0.6162);-webkit-text-stroke:0.15px #c0282f;">DELETE KEY</span>
<span class="t" style="left:220.20px;top:87px;font-size:6.4px;line-height:6.4px;font-weight:400;color:#333;font-family:'Liberation Sans', sans-serif;transform:scaleX(0.7541);-webkit-text-stroke:0.12px #333;">Filter by index</span>
<div class="a" style="left:255.20px;top:84.20px;width:373.80px;height:12.40px;background:#ffffff;box-sizing:border-box;border:0.6px solid #a9a9a9;border-radius:1.5px;"></div>
<div class="a" style="left:631.60px;top:84.30px;width:9.60px;height:11.80px;background:#ffffff;box-sizing:border-box;border:0.7px solid #5c6b86;border-radius:1.2px;"></div>
<svg class="a" style="left:633.90px;top:87.60px;width:5.00px;height:5.60px" viewBox="0 0 5 5.6" preserveAspectRatio="none"><circle cx="2.3" cy="2.4" r="1.8" fill="none" stroke="#33415c" stroke-width="0.8"/><line x1="3.6" y1="3.7" x2="4.9" y2="5.3" stroke="#33415c" stroke-width="0.9"/></svg>
<div class="a" style="left:217.70px;top:100.00px;width:424.80px;height:15.75px;background:#d9d9d9;"></div>
<span class="t" style="left:220.20px;top:105px;font-size:6.4px;line-height:6.4px;font-weight:700;color:#1a1a1a;font-family:'Liberation Sans', sans-serif;transform:scaleX(0.7304);-webkit-text-stroke:0.25px #1a1a1a;">Index</span>
<span class="t" style="left:306.40px;top:105px;font-size:6.4px;line-height:6.4px;font-weight:700;color:#1a1a1a;font-family:'Liberation Sans', sans-serif;transform:scaleX(0.7317);-webkit-text-stroke:0.25px #1a1a1a;">Element</span>
<div class="a" style="left:217.70px;top:115.75px;width:420.90px;height:14.66px;background:#f2f2f2;"></div>
<span class="t" style="left:220.20px;top:121px;font-size:6.6px;line-height:6.6px;font-weight:400;color:#303030;font-family:'Liberation Sans', sans-serif;transform:scaleX(0.8170);-webkit-text-stroke:0.05px #303030;">0</span>
<span class="t" style="left:305.40px;top:121px;font-size:6.6px;line-height:6.6px;font-weight:400;color:#383838;font-family:'Liberation Sans', sans-serif;transform:scaleX(0.7319);-webkit-text-stroke:0.06px #383838;">{"@id":"1861796614755059678","@timestamp":1732721878123,"@type":"AuditEvent","@product":"otoroshi","@serviceId":"--","@service":"Ot...</span>
<div class="a" style="left:615.20px;top:117.65px;width:9.50px;height:11.20px;background:#ffffff;box-sizing:border-box;border:0.8px solid #a8bedf;border-radius:1.2px;"></div>
<svg class="a" style="left:617.50px;top:121.00px;width:4.80px;height:5.90px" viewBox="0 0 4.8 5.8" preserveAspectRatio="none"><line x1="1.1" y1="4.5" x2="3.9" y2="1.0" stroke="#2e5aa8" stroke-width="1.25" stroke-linecap="round"/><rect x="0.5" y="4.9" width="4.0" height="0.7" fill="#2e5aa8"/></svg>
<div class="a" style="left:626.20px;top:117.65px;width:9.50px;height:11.20px;background:#ffffff;box-sizing:border-box;border:0.8px solid #8593a8;border-radius:1.2px;"></div>
<svg class="a" style="left:628.00px;top:120.00px;width:5.00px;height:6.00px" viewBox="0 0 5 6" preserveAspectRatio="none"><rect x="0.5" y="1.05" width="4" height="4.5" rx="0.9" fill="none" stroke="#46536a" stroke-width="0.8"/><rect x="1.3" y="0.3" width="2.4" height="1.3" rx="0.4" fill="#3e4b63"/></svg>
<span class="t" style="left:220.20px;top:135px;font-size:6.6px;line-height:6.6px;font-weight:400;color:#303030;font-family:'Liberation Sans', sans-serif;transform:scaleX(0.8170);-webkit-text-stroke:0.05px #303030;">1</span>
<span class="t" style="left:305.40px;top:135px;font-size:6.6px;line-height:6.6px;font-weight:400;color:#383838;font-family:'Liberation Sans', sans-serif;transform:scaleX(0.7319);-webkit-text-stroke:0.06px #383838;">{"@id":"1861796614599870429","@timestamp":1732721878086,"@type":"AuditEvent","@product":"otoroshi","@serviceId":"--","@service":"Ot...</span>
<div class="a" style="left:615.20px;top:132.31px;width:9.50px;height:11.20px;background:#ffffff;box-sizing:border-box;border:0.8px solid #a8bedf;border-radius:1.2px;"></div>
<svg class="a" style="left:617.50px;top:135.00px;width:4.80px;height:5.90px" viewBox="0 0 4.8 5.8" preserveAspectRatio="none"><line x1="1.1" y1="4.5" x2="3.9" y2="1.0" stroke="#2e5aa8" stroke-width="1.25" stroke-linecap="round"/><rect x="0.5" y="4.9" width="4.0" height="0.7" fill="#2e5aa8"/></svg>
<div class="a" style="left:626.20px;top:132.31px;width:9.50px;height:11.20px;background:#ffffff;box-sizing:border-box;border:0.8px solid #8593a8;border-radius:1.2px;"></div>
<svg class="a" style="left:628.00px;top:135.00px;width:5.00px;height:6.00px" viewBox="0 0 5 6" preserveAspectRatio="none"><rect x="0.5" y="1.05" width="4" height="4.5" rx="0.9" fill="none" stroke="#46536a" stroke-width="0.8"/><rect x="1.3" y="0.3" width="2.4" height="1.3" rx="0.4" fill="#3e4b63"/></svg>
<div class="a" style="left:217.70px;top:145.07px;width:420.90px;height:14.66px;background:#f2f2f2;"></div>
<span class="t" style="left:220.20px;top:150px;font-size:6.6px;line-height:6.6px;font-weight:400;color:#303030;font-family:'Liberation Sans', sans-serif;transform:scaleX(0.8170);-webkit-text-stroke:0.05px #303030;">2</span>
<span class="t" style="left:305.40px;top:150px;font-size:6.6px;line-height:6.6px;font-weight:400;color:#383838;font-family:'Liberation Sans', sans-serif;transform:scaleX(0.7319);-webkit-text-stroke:0.06px #383838;">{"@id":"1861796599324215255","@timestamp":1732721874444,"@type":"AuditEvent","@product":"otoroshi","@serviceId":"--","@service":"Ot...</span>
<div class="a" style="left:615.20px;top:146.97px;width:9.50px;height:11.20px;background:#ffffff;box-sizing:border-box;border:0.8px solid #a8bedf;border-radius:1.2px;"></div>
<svg class="a" style="left:617.50px;top:150.00px;width:4.80px;height:5.90px" viewBox="0 0 4.8 5.8" preserveAspectRatio="none"><line x1="1.1" y1="4.5" x2="3.9" y2="1.0" stroke="#2e5aa8" stroke-width="1.25" stroke-linecap="round"/><rect x="0.5" y="4.9" width="4.0" height="0.7" fill="#2e5aa8"/></svg>
<div class="a" style="left:626.20px;top:146.97px;width:9.50px;height:11.20px;background:#ffffff;box-sizing:border-box;border:0.8px solid #8593a8;border-radius:1.2px;"></div>
<svg class="a" style="left:628.00px;top:150.00px;width:5.00px;height:6.00px" viewBox="0 0 5 6" preserveAspectRatio="none"><rect x="0.5" y="1.05" width="4" height="4.5" rx="0.9" fill="none" stroke="#46536a" stroke-width="0.8"/><rect x="1.3" y="0.3" width="2.4" height="1.3" rx="0.4" fill="#3e4b63"/></svg>
<span class="t" style="left:220.20px;top:165px;font-size:6.6px;line-height:6.6px;font-weight:400;color:#303030;font-family:'Liberation Sans', sans-serif;transform:scaleX(0.8170);-webkit-text-stroke:0.05px #303030;">3</span>
<span class="t" style="left:305.40px;top:165px;font-size:6.6px;line-height:6.6px;font-weight:400;color:#383838;font-family:'Liberation Sans', sans-serif;transform:scaleX(0.7319);-webkit-text-stroke:0.06px #383838;">{"@id":"1861796599265494898","@timestamp":1732721874430,"@type":"AuditEvent","@product":"otoroshi","@serviceId":"--","@service":"Ot...</span>
<div class="a" style="left:615.20px;top:161.63px;width:9.50px;height:11.20px;background:#ffffff;box-sizing:border-box;border:0.8px solid #a8bedf;border-radius:1.2px;"></div>
<svg class="a" style="left:617.50px;top:165.00px;width:4.80px;height:5.90px" viewBox="0 0 4.8 5.8" preserveAspectRatio="none"><line x1="1.1" y1="4.5" x2="3.9" y2="1.0" stroke="#2e5aa8" stroke-width="1.25" stroke-linecap="round"/><rect x="0.5" y="4.9" width="4.0" height="0.7" fill="#2e5aa8"/></svg>
<div class="a" style="left:626.20px;top:161.63px;width:9.50px;height:11.20px;background:#ffffff;box-sizing:border-box;border:0.8px solid #8593a8;border-radius:1.2px;"></div>
<svg class="a" style="left:628.00px;top:164.00px;width:5.00px;height:6.00px" viewBox="0 0 5 6" preserveAspectRatio="none"><rect x="0.5" y="1.05" width="4" height="4.5" rx="0.9" fill="none" stroke="#46536a" stroke-width="0.8"/><rect x="1.3" y="0.3" width="2.4" height="1.3" rx="0.4" fill="#3e4b63"/></svg>
<div class="a" style="left:217.70px;top:174.39px;width:420.90px;height:14.66px;background:#f2f2f2;"></div>
<span class="t" style="left:220.20px;top:179px;font-size:6.6px;line-height:6.6px;font-weight:400;color:#303030;font-family:'Liberation Sans', sans-serif;transform:scaleX(0.8170);-webkit-text-stroke:0.05px #303030;">4</span>
<span class="t" style="left:305.40px;top:179px;font-size:6.6px;line-height:6.6px;font-weight:400;color:#383838;font-family:'Liberation Sans', sans-serif;transform:scaleX(0.7319);-webkit-text-stroke:0.06px #383838;">{"@id":"1861796598883813332","@timestamp":1732721874339,"@type":"AuditEvent","@product":"otoroshi","@serviceId":"--","@service":"Ot...</span>
<div class="a" style="left:615.20px;top:176.29px;width:9.50px;height:11.20px;background:#ffffff;box-sizing:border-box;border:0.8px solid #a8bedf;border-radius:1.2px;"></div>
<svg class="a" style="left:617.50px;top:179.00px;width:4.80px;height:5.90px" viewBox="0 0 4.8 5.8" preserveAspectRatio="none"><line x1="1.1" y1="4.5" x2="3.9" y2="1.0" stroke="#2e5aa8" stroke-width="1.25" stroke-linecap="round"/><rect x="0.5" y="4.9" width="4.0" height="0.7" fill="#2e5aa8"/></svg>
<div class="a" style="left:626.20px;top:176.29px;width:9.50px;height:11.20px;background:#ffffff;box-sizing:border-box;border:0.8px solid #8593a8;border-radius:1.2px;"></div>
<svg class="a" style="left:628.00px;top:179.00px;width:5.00px;height:6.00px" viewBox="0 0 5 6" preserveAspectRatio="none"><rect x="0.5" y="1.05" width="4" height="4.5" rx="0.9" fill="none" stroke="#46536a" stroke-width="0.8"/><rect x="1.3" y="0.3" width="2.4" height="1.3" rx="0.4" fill="#3e4b63"/></svg>
<span class="t" style="left:220.20px;top:194px;font-size:6.6px;line-height:6.6px;font-weight:400;color:#303030;font-family:'Liberation Sans', sans-serif;transform:scaleX(0.8170);-webkit-text-stroke:0.05px #303030;">5</span>
<span class="t" style="left:305.40px;top:194px;font-size:6.6px;line-height:6.6px;font-weight:400;color:#383838;font-family:'Liberation Sans', sans-serif;transform:scaleX(0.7319);-webkit-text-stroke:0.06px #383838;">{"@id":"1861796598741296995","@timestamp":1732721874305,"@type":"AuditEvent","@product":"otoroshi","@serviceId":"--","@service":"Ot...</span>
<div class="a" style="left:615.20px;top:190.95px;width:9.50px;height:11.20px;background:#ffffff;box-sizing:border-box;border:0.8px solid #a8bedf;border-radius:1.2px;"></div>
<svg class="a" style="left:617.50px;top:194.00px;width:4.80px;height:5.90px" viewBox="0 0 4.8 5.8" preserveAspectRatio="none"><line x1="1.1" y1="4.5" x2="3.9" y2="1.0" stroke="#2e5aa8" stroke-width="1.25" stroke-linecap="round"/><rect x="0.5" y="4.9" width="4.0" height="0.7" fill="#2e5aa8"/></svg>
<div class="a" style="left:626.20px;top:190.95px;width:9.50px;height:11.20px;background:#ffffff;box-sizing:border-box;border:0.8px solid #8593a8;border-radius:1.2px;"></div>
<svg class="a" style="left:628.00px;top:194.00px;width:5.00px;height:6.00px" viewBox="0 0 5 6" preserveAspectRatio="none"><rect x="0.5" y="1.05" width="4" height="4.5" rx="0.9" fill="none" stroke="#46536a" stroke-width="0.8"/><rect x="1.3" y="0.3" width="2.4" height="1.3" rx="0.4" fill="#3e4b63"/></svg>
<div class="a" style="left:217.70px;top:203.71px;width:420.90px;height:14.66px;background:#f2f2f2;"></div>
<span class="t" style="left:220.20px;top:209px;font-size:6.6px;line-height:6.6px;font-weight:400;color:#303030;font-family:'Liberation Sans', sans-serif;transform:scaleX(0.8170);-webkit-text-stroke:0.05px #303030;">6</span>
<span class="t" style="left:305.40px;top:209px;font-size:6.6px;line-height:6.6px;font-weight:400;color:#383838;font-family:'Liberation Sans', sans-serif;transform:scaleX(0.7319);-webkit-text-stroke:0.06px #383838;">{"@id":"1861796579229304777","@timestamp":1732721869653,"@type":"AuditEvent","@product":"otoroshi","@serviceId":"--","@service":"Ot...</span>
<div class="a" style="left:615.20px;top:205.61px;width:9.50px;height:11.20px;background:#ffffff;box-sizing:border-box;border:0.8px solid #a8bedf;border-radius:1.2px;"></div>
<svg class="a" style="left:617.50px;top:209.00px;width:4.80px;height:5.90px" viewBox="0 0 4.8 5.8" preserveAspectRatio="none"><line x1="1.1" y1="4.5" x2="3.9" y2="1.0" stroke="#2e5aa8" stroke-width="1.25" stroke-linecap="round"/><rect x="0.5" y="4.9" width="4.0" height="0.7" fill="#2e5aa8"/></svg>
<div class="a" style="left:626.20px;top:205.61px;width:9.50px;height:11.20px;background:#ffffff;box-sizing:border-box;border:0.8px solid #8593a8;border-radius:1.2px;"></div>
<svg class="a" style="left:628.00px;top:208.00px;width:5.00px;height:6.00px" viewBox="0 0 5 6" preserveAspectRatio="none"><rect x="0.5" y="1.05" width="4" height="4.5" rx="0.9" fill="none" stroke="#46536a" stroke-width="0.8"/><rect x="1.3" y="0.3" width="2.4" height="1.3" rx="0.4" fill="#3e4b63"/></svg>
<span class="t" style="left:220.20px;top:223px;font-size:6.6px;line-height:6.6px;font-weight:400;color:#303030;font-family:'Liberation Sans', sans-serif;transform:scaleX(0.8170);-webkit-text-stroke:0.05px #303030;">7</span>
<span class="t" style="left:305.40px;top:223px;font-size:6.6px;line-height:6.6px;font-weight:400;color:#383838;font-family:'Liberation Sans', sans-serif;transform:scaleX(0.7319);-webkit-text-stroke:0.06px #383838;">{"@id":"1861796579057338312","@timestamp":1732721869612,"@type":"AuditEvent","@product":"otoroshi","@serviceId":"--","@service":"Ot...</span>
<div class="a" style="left:615.20px;top:220.27px;width:9.50px;height:11.20px;background:#ffffff;box-sizing:border-box;border:0.8px solid #a8bedf;border-radius:1.2px;"></div>
<svg class="a" style="left:617.50px;top:223.00px;width:4.80px;height:5.90px" viewBox="0 0 4.8 5.8" preserveAspectRatio="none"><line x1="1.1" y1="4.5" x2="3.9" y2="1.0" stroke="#2e5aa8" stroke-width="1.25" stroke-linecap="round"/><rect x="0.5" y="4.9" width="4.0" height="0.7" fill="#2e5aa8"/></svg>
<div class="a" style="left:626.20px;top:220.27px;width:9.50px;height:11.20px;background:#ffffff;box-sizing:border-box;border:0.8px solid #8593a8;border-radius:1.2px;"></div>
<svg class="a" style="left:628.00px;top:223.00px;width:5.00px;height:6.00px" viewBox="0 0 5 6" preserveAspectRatio="none"><rect x="0.5" y="1.05" width="4" height="4.5" rx="0.9" fill="none" stroke="#46536a" stroke-width="0.8"/><rect x="1.3" y="0.3" width="2.4" height="1.3" rx="0.4" fill="#3e4b63"/></svg>
<div class="a" style="left:217.70px;top:233.03px;width:420.90px;height:14.66px;background:#f2f2f2;"></div>
<span class="t" style="left:220.20px;top:238px;font-size:6.6px;line-height:6.6px;font-weight:400;color:#303030;font-family:'Liberation Sans', sans-serif;transform:scaleX(0.8170);-webkit-text-stroke:0.05px #303030;">8</span>
<span class="t" style="left:305.40px;top:238px;font-size:6.6px;line-height:6.6px;font-weight:400;color:#383838;font-family:'Liberation Sans', sans-serif;transform:scaleX(0.7319);-webkit-text-stroke:0.06px #383838;">{"@id":"1861796521075279795","@timestamp":1732721855789,"@type":"AuditEvent","@product":"otoroshi","@serviceId":"--","@service":"Ot...</span>
<div class="a" style="left:615.20px;top:234.93px;width:9.50px;height:11.20px;background:#ffffff;box-sizing:border-box;border:0.8px solid #a8bedf;border-radius:1.2px;"></div>
<svg class="a" style="left:617.50px;top:238.00px;width:4.80px;height:5.90px" viewBox="0 0 4.8 5.8" preserveAspectRatio="none"><line x1="1.1" y1="4.5" x2="3.9" y2="1.0" stroke="#2e5aa8" stroke-width="1.25" stroke-linecap="round"/><rect x="0.5" y="4.9" width="4.0" height="0.7" fill="#2e5aa8"/></svg>
<div class="a" style="left:626.20px;top:234.93px;width:9.50px;height:11.20px;background:#ffffff;box-sizing:border-box;border:0.8px solid #8593a8;border-radius:1.2px;"></div>
<svg class="a" style="left:628.00px;top:238.00px;width:5.00px;height:6.00px" viewBox="0 0 5 6" preserveAspectRatio="none"><rect x="0.5" y="1.05" width="4" height="4.5" rx="0.9" fill="none" stroke="#46536a" stroke-width="0.8"/><rect x="1.3" y="0.3" width="2.4" height="1.3" rx="0.4" fill="#3e4b63"/></svg>
<span class="t" style="left:220.20px;top:253px;font-size:6.6px;line-height:6.6px;font-weight:400;color:#303030;font-family:'Liberation Sans', sans-serif;transform:scaleX(0.8170);-webkit-text-stroke:0.05px #303030;">9</span>
<span class="t" style="left:305.40px;top:253px;font-size:6.6px;line-height:6.6px;font-weight:400;color:#383838;font-family:'Liberation Sans', sans-serif;transform:scaleX(0.7328);-webkit-text-stroke:0.06px #383838;">{"@id":"1861796520811038642","@timestamp":1732721855725,"@type":"AuditEvent","@product":"otoroshi","@serviceId":"--","@service":"Ot...</span>
<div class="a" style="left:615.20px;top:249.59px;width:9.50px;height:11.20px;background:#ffffff;box-sizing:border-box;border:0.8px solid #a8bedf;border-radius:1.2px;"></div>
<svg class="a" style="left:617.50px;top:253.00px;width:4.80px;height:5.90px" viewBox="0 0 4.8 5.8" preserveAspectRatio="none"><line x1="1.1" y1="4.5" x2="3.9" y2="1.0" stroke="#2e5aa8" stroke-width="1.25" stroke-linecap="round"/><rect x="0.5" y="4.9" width="4.0" height="0.7" fill="#2e5aa8"/></svg>
<div class="a" style="left:626.20px;top:249.59px;width:9.50px;height:11.20px;background:#ffffff;box-sizing:border-box;border:0.8px solid #8593a8;border-radius:1.2px;"></div>
<svg class="a" style="left:628.00px;top:252.00px;width:5.00px;height:6.00px" viewBox="0 0 5 6" preserveAspectRatio="none"><rect x="0.5" y="1.05" width="4" height="4.5" rx="0.9" fill="none" stroke="#46536a" stroke-width="0.8"/><rect x="1.3" y="0.3" width="2.4" height="1.3" rx="0.4" fill="#3e4b63"/></svg>
<div class="a" style="left:217.70px;top:262.35px;width:420.90px;height:14.66px;background:#f2f2f2;"></div>
<span class="t" style="left:220.20px;top:267px;font-size:6.6px;line-height:6.6px;font-weight:400;color:#303030;font-family:'Liberation Sans', sans-serif;transform:scaleX(0.6264);-webkit-text-stroke:0.05px #303030;">10</span>
<span class="t" style="left:305.40px;top:267px;font-size:6.6px;line-height:6.6px;font-weight:400;color:#383838;font-family:'Liberation Sans', sans-serif;transform:scaleX(0.7319);-webkit-text-stroke:0.06px #383838;">{"@id":"1861796397230065543","@timestamp":1732721826261,"@type":"AuditEvent","@product":"otoroshi","@serviceId":"--","@service":"Ot...</span>
<div class="a" style="left:615.20px;top:264.25px;width:9.50px;height:11.20px;background:#ffffff;box-sizing:border-box;border:0.8px solid #a8bedf;border-radius:1.2px;"></div>
<svg class="a" style="left:617.50px;top:267.00px;width:4.80px;height:5.90px" viewBox="0 0 4.8 5.8" preserveAspectRatio="none"><line x1="1.1" y1="4.5" x2="3.9" y2="1.0" stroke="#2e5aa8" stroke-width="1.25" stroke-linecap="round"/><rect x="0.5" y="4.9" width="4.0" height="0.7" fill="#2e5aa8"/></svg>
<div class="a" style="left:626.20px;top:264.25px;width:9.50px;height:11.20px;background:#ffffff;box-sizing:border-box;border:0.8px solid #8593a8;border-radius:1.2px;"></div>
<svg class="a" style="left:628.00px;top:267.00px;width:5.00px;height:6.00px" viewBox="0 0 5 6" preserveAspectRatio="none"><rect x="0.5" y="1.05" width="4" height="4.5" rx="0.9" fill="none" stroke="#46536a" stroke-width="0.8"/><rect x="1.3" y="0.3" width="2.4" height="1.3" rx="0.4" fill="#3e4b63"/></svg>
<span class="t" style="left:220.20px;top:282px;font-size:6.6px;line-height:6.6px;font-weight:400;color:#303030;font-family:'Liberation Sans', sans-serif;transform:scaleX(0.6706);-webkit-text-stroke:0.05px #303030;">11</span>
<span class="t" style="left:305.40px;top:282px;font-size:6.6px;line-height:6.6px;font-weight:400;color:#383838;font-family:'Liberation Sans', sans-serif;transform:scaleX(0.7319);-webkit-text-stroke:0.06px #383838;">{"@id":"1861796397079070598","@timestamp":1732721826225,"@type":"AuditEvent","@product":"otoroshi","@serviceId":"--","@service":"Ot...</span>
<div class="a" style="left:615.20px;top:278.91px;width:9.50px;height:11.20px;background:#ffffff;box-sizing:border-box;border:0.8px solid #a8bedf;border-radius:1.2px;"></div>
<svg class="a" style="left:617.50px;top:282.00px;width:4.80px;height:5.90px" viewBox="0 0 4.8 5.8" preserveAspectRatio="none"><line x1="1.1" y1="4.5" x2="3.9" y2="1.0" stroke="#2e5aa8" stroke-width="1.25" stroke-linecap="round"/><rect x="0.5" y="4.9" width="4.0" height="0.7" fill="#2e5aa8"/></svg>
<div class="a" style="left:626.20px;top:278.91px;width:9.50px;height:11.20px;background:#ffffff;box-sizing:border-box;border:0.8px solid #8593a8;border-radius:1.2px;"></div>
<svg class="a" style="left:628.00px;top:282.00px;width:5.00px;height:6.00px" viewBox="0 0 5 6" preserveAspectRatio="none"><rect x="0.5" y="1.05" width="4" height="4.5" rx="0.9" fill="none" stroke="#46536a" stroke-width="0.8"/><rect x="1.3" y="0.3" width="2.4" height="1.3" rx="0.4" fill="#3e4b63"/></svg>
<div class="a" style="left:217.70px;top:291.67px;width:420.90px;height:14.66px;background:#f2f2f2;"></div>
<span class="t" style="left:220.20px;top:297px;font-size:6.6px;line-height:6.6px;font-weight:400;color:#303030;font-family:'Liberation Sans', sans-serif;transform:scaleX(0.6264);-webkit-text-stroke:0.05px #303030;">12</span>
<span class="t" style="left:305.40px;top:297px;font-size:6.6px;line-height:6.6px;font-weight:400;color:#383838;font-family:'Liberation Sans', sans-serif;transform:scaleX(0.7319);-webkit-text-stroke:0.06px #383838;">{"@id":"1861796396298930053","@timestamp":1732721826039,"@type":"AuditEvent","@product":"otoroshi","@serviceId":"--","@service":"Ot...</span>
<div class="a" style="left:615.20px;top:293.57px;width:9.50px;height:11.20px;background:#ffffff;box-sizing:border-box;border:0.8px solid #a8bedf;border-radius:1.2px;"></div>
<svg class="a" style="left:617.50px;top:297.00px;width:4.80px;height:5.90px" viewBox="0 0 4.8 5.8" preserveAspectRatio="none"><line x1="1.1" y1="4.5" x2="3.9" y2="1.0" stroke="#2e5aa8" stroke-width="1.25" stroke-linecap="round"/><rect x="0.5" y="4.9" width="4.0" height="0.7" fill="#2e5aa8"/></svg>
<div class="a" style="left:626.20px;top:293.57px;width:9.50px;height:11.20px;background:#ffffff;box-sizing:border-box;border:0.8px solid #8593a8;border-radius:1.2px;"></div>
<svg class="a" style="left:628.00px;top:296.00px;width:5.00px;height:6.00px" viewBox="0 0 5 6" preserveAspectRatio="none"><rect x="0.5" y="1.05" width="4" height="4.5" rx="0.9" fill="none" stroke="#46536a" stroke-width="0.8"/><rect x="1.3" y="0.3" width="2.4" height="1.3" rx="0.4" fill="#3e4b63"/></svg>
<span class="t" style="left:220.20px;top:311px;font-size:6.6px;line-height:6.6px;font-weight:400;color:#303030;font-family:'Liberation Sans', sans-serif;transform:scaleX(0.6264);-webkit-text-stroke:0.05px #303030;">13</span>
<span class="t" style="left:305.40px;top:311px;font-size:6.6px;line-height:6.6px;font-weight:400;color:#383838;font-family:'Liberation Sans', sans-serif;transform:scaleX(0.7319);-webkit-text-stroke:0.06px #383838;">{"@id":"1861796396269589824","@timestamp":1732721826032,"@type":"AuditEvent","@product":"otoroshi","@serviceId":"--","@service":"Ot...</span>
<div class="a" style="left:615.20px;top:308.23px;width:9.50px;height:11.20px;background:#ffffff;box-sizing:border-box;border:0.8px solid #a8bedf;border-radius:1.2px;"></div>
<svg class="a" style="left:617.50px;top:311.00px;width:4.80px;height:5.90px" viewBox="0 0 4.8 5.8" preserveAspectRatio="none"><line x1="1.1" y1="4.5" x2="3.9" y2="1.0" stroke="#2e5aa8" stroke-width="1.25" stroke-linecap="round"/><rect x="0.5" y="4.9" width="4.0" height="0.7" fill="#2e5aa8"/></svg>
<div class="a" style="left:626.20px;top:308.23px;width:9.50px;height:11.20px;background:#ffffff;box-sizing:border-box;border:0.8px solid #8593a8;border-radius:1.2px;"></div>
<svg class="a" style="left:628.00px;top:311.00px;width:5.00px;height:6.00px" viewBox="0 0 5 6" preserveAspectRatio="none"><rect x="0.5" y="1.05" width="4" height="4.5" rx="0.9" fill="none" stroke="#46536a" stroke-width="0.8"/><rect x="1.3" y="0.3" width="2.4" height="1.3" rx="0.4" fill="#3e4b63"/></svg>
<div class="a" style="left:217.70px;top:320.99px;width:420.90px;height:14.66px;background:#f2f2f2;"></div>
<span class="t" style="left:220.20px;top:326px;font-size:6.6px;line-height:6.6px;font-weight:400;color:#303030;font-family:'Liberation Sans', sans-serif;transform:scaleX(0.6264);-webkit-text-stroke:0.05px #303030;">14</span>
<span class="t" style="left:305.40px;top:326px;font-size:6.6px;line-height:6.6px;font-weight:400;color:#383838;font-family:'Liberation Sans', sans-serif;transform:scaleX(0.7319);-webkit-text-stroke:0.06px #383838;">{"@id":"1859154050663057636","@timestamp":1732091841747,"@type":"AuditEvent","@product":"otoroshi","@serviceId":"--","@service":"Ot...</span>
<div class="a" style="left:615.20px;top:322.89px;width:9.50px;height:11.20px;background:#ffffff;box-sizing:border-box;border:0.8px solid #a8bedf;border-radius:1.2px;"></div>
<svg class="a" style="left:617.50px;top:326.00px;width:4.80px;height:5.90px" viewBox="0 0 4.8 5.8" preserveAspectRatio="none"><line x1="1.1" y1="4.5" x2="3.9" y2="1.0" stroke="#2e5aa8" stroke-width="1.25" stroke-linecap="round"/><rect x="0.5" y="4.9" width="4.0" height="0.7" fill="#2e5aa8"/></svg>
<div class="a" style="left:626.20px;top:322.89px;width:9.50px;height:11.20px;background:#ffffff;box-sizing:border-box;border:0.8px solid #8593a8;border-radius:1.2px;"></div>
<svg class="a" style="left:628.00px;top:325.00px;width:5.00px;height:6.00px" viewBox="0 0 5 6" preserveAspectRatio="none"><rect x="0.5" y="1.05" width="4" height="4.5" rx="0.9" fill="none" stroke="#46536a" stroke-width="0.8"/><rect x="1.3" y="0.3" width="2.4" height="1.3" rx="0.4" fill="#3e4b63"/></svg>
<span class="t" style="left:220.20px;top:341px;font-size:6.6px;line-height:6.6px;font-weight:400;color:#303030;font-family:'Liberation Sans', sans-serif;transform:scaleX(0.6264);-webkit-text-stroke:0.05px #303030;">15</span>
<span class="t" style="left:305.40px;top:341px;font-size:6.6px;line-height:6.6px;font-weight:400;color:#383838;font-family:'Liberation Sans', sans-serif;transform:scaleX(0.7319);-webkit-text-stroke:0.06px #383838;">{"@id":"1859154041657886947","@timestamp":1732091839600,"@type":"AuditEvent","@product":"otoroshi","@serviceId":"--","@service":"Ot...</span>
<div class="a" style="left:615.20px;top:337.55px;width:9.50px;height:11.20px;background:#ffffff;box-sizing:border-box;border:0.8px solid #a8bedf;border-radius:1.2px;"></div>
<svg class="a" style="left:617.50px;top:341.00px;width:4.80px;height:5.90px" viewBox="0 0 4.8 5.8" preserveAspectRatio="none"><line x1="1.1" y1="4.5" x2="3.9" y2="1.0" stroke="#2e5aa8" stroke-width="1.25" stroke-linecap="round"/><rect x="0.5" y="4.9" width="4.0" height="0.7" fill="#2e5aa8"/></svg>
<div class="a" style="left:626.20px;top:337.55px;width:9.50px;height:11.20px;background:#ffffff;box-sizing:border-box;border:0.8px solid #8593a8;border-radius:1.2px;"></div>
<svg class="a" style="left:628.00px;top:340.00px;width:5.00px;height:6.00px" viewBox="0 0 5 6" preserveAspectRatio="none"><rect x="0.5" y="1.05" width="4" height="4.5" rx="0.9" fill="none" stroke="#46536a" stroke-width="0.8"/><rect x="1.3" y="0.3" width="2.4" height="1.3" rx="0.4" fill="#3e4b63"/></svg>
<div class="a" style="left:638.60px;top:115.70px;width:3.90px;height:234.50px;background:#f5f5f5;"></div>
<div class="a" style="left:639.00px;top:117.20px;width:2.70px;height:135.30px;background:#c4c4c4;border-radius:1.4px;"></div>
<div class="a" style="left:217.70px;top:350.00px;width:424.80px;height:0.80px;background:#d6d6d6;"></div>
<span class="t" style="left:222.60px;top:360px;font-size:6.4px;line-height:6.4px;font-weight:400;color:#333;font-family:'Liberation Sans', sans-serif;transform:scaleX(0.7152);-webkit-text-stroke:0.12px #333;">Push to</span>
<div class="a" style="left:244.20px;top:357.30px;width:29.50px;height:12.40px;background:#ffffff;box-sizing:border-box;border:0.6px solid #b5b5b5;border-radius:1.5px;"></div>
<span class="t" style="left:247.00px;top:360px;font-size:6.0px;line-height:6.0px;font-weight:400;color:#222;font-family:'Liberation Sans', sans-serif;transform:scaleX(0.8208);-webkit-text-stroke:0.12px #222;">Tail</span>
<svg class="a" style="left:267.20px;top:362.00px;width:4.00px;height:3.40px" viewBox="0 0 4 3.4" preserveAspectRatio="none"><polygon points="0,0 4,0 2,3.4" fill="#2d5aa0"/></svg>
<span class="t" style="left:276.80px;top:360px;font-size:6.4px;line-height:6.4px;font-weight:400;color:#333;font-family:'Liberation Sans', sans-serif;transform:scaleX(0.7334);-webkit-text-stroke:0.12px #333;">Element</span>
<div class="a" style="left:299.50px;top:357.50px;width:311.00px;height:12.00px;background:#ffffff;box-sizing:border-box;border:0.6px solid #a9a9a9;border-radius:1.5px;"></div>
<div class="a" style="left:613.30px;top:357.00px;width:24.50px;height:13.00px;background:#ffffff;box-sizing:border-box;border:0.7px solid #5c6b86;border-radius:1.2px;"></div>
<svg class="a" style="left:616.60px;top:361.60px;width:3.20px;height:3.20px" viewBox="0 0 3.2 3.2" preserveAspectRatio="none"><rect x="1.3" y="0" width="0.6" height="3.2" fill="#1f2a44"/><rect x="0" y="1.3" width="3.2" height="0.6" fill="#1f2a44"/></svg>
<span class="t" style="left:624.00px;top:362px;font-size:5.6px;line-height:5.6px;font-weight:700;color:#1f2a44;font-family:'Liberation Sans', sans-serif;transform:scaleX(0.7075);-webkit-text-stroke:0.15px #1f2a44;">PUSH</span>
<div class="a" style="left:75.30px;top:381.80px;width:568.30px;height:46.80px;background:#0a1622;box-sizing:border-box;border:1.3px solid #5f80bb;border-radius:2px;"></div>
<span class="t" style="left:79.60px;top:390px;font-size:5.8px;line-height:5.8px;font-weight:400;color:#d3d7de;font-family:'Liberation Mono', monospace;transform:scaleX(0.6669);-webkit-text-stroke:0.1px #d3d7de;">KV Explorer Terminal</span>
<svg class="a" style="left:471.40px;top:389.90px;width:4.40px;height:4.20px" viewBox="0 0 4.4 4.2" preserveAspectRatio="none"><polygon points="2.2,0.1 4.4,4.1 0,4.1" fill="#d9682f"/></svg>
<span class="t" style="left:478.40px;top:390px;font-size:5.8px;line-height:5.8px;font-weight:400;color:#d3d7de;font-family:'Liberation Mono', monospace;transform:scaleX(0.6579);-webkit-text-stroke:0.1px #d3d7de;">All commands executed in this CLI are immediately sent to the database</span>
<div class="a" style="left:76.10px;top:399.70px;width:566.70px;height:0.80px;background:#4a5563;"></div>
<span class="t" style="left:78.80px;top:404px;font-size:5.8px;line-height:5.8px;font-weight:400;color:#d3d7de;font-family:'Liberation Mono', monospace;transform:scaleX(0.6611);-webkit-text-stroke:0.1px #d3d7de;"># PING "Hello, Clever World!"</span>
<span class="t" style="left:78.00px;top:411px;font-size:5.8px;line-height:5.8px;font-weight:400;color:#5d8fe3;font-family:'Liberation Mono', monospace;transform:scaleX(0.6689);-webkit-text-stroke:0.15px #5d8fe3;">"Hello, Clever World!"</span>
<span class="t" style="left:78.60px;top:419px;font-size:5.8px;line-height:5.8px;font-weight:400;color:#d3d7de;font-family:'Liberation Mono', monospace;transform:scaleX(0.9758);-webkit-text-stroke:0.1px #d3d7de;">#</span>
<div class="a" style="left:83.10px;top:418.20px;width:0.50px;height:6.20px;background:#b8bec8;"></div>
</div></body></html>
